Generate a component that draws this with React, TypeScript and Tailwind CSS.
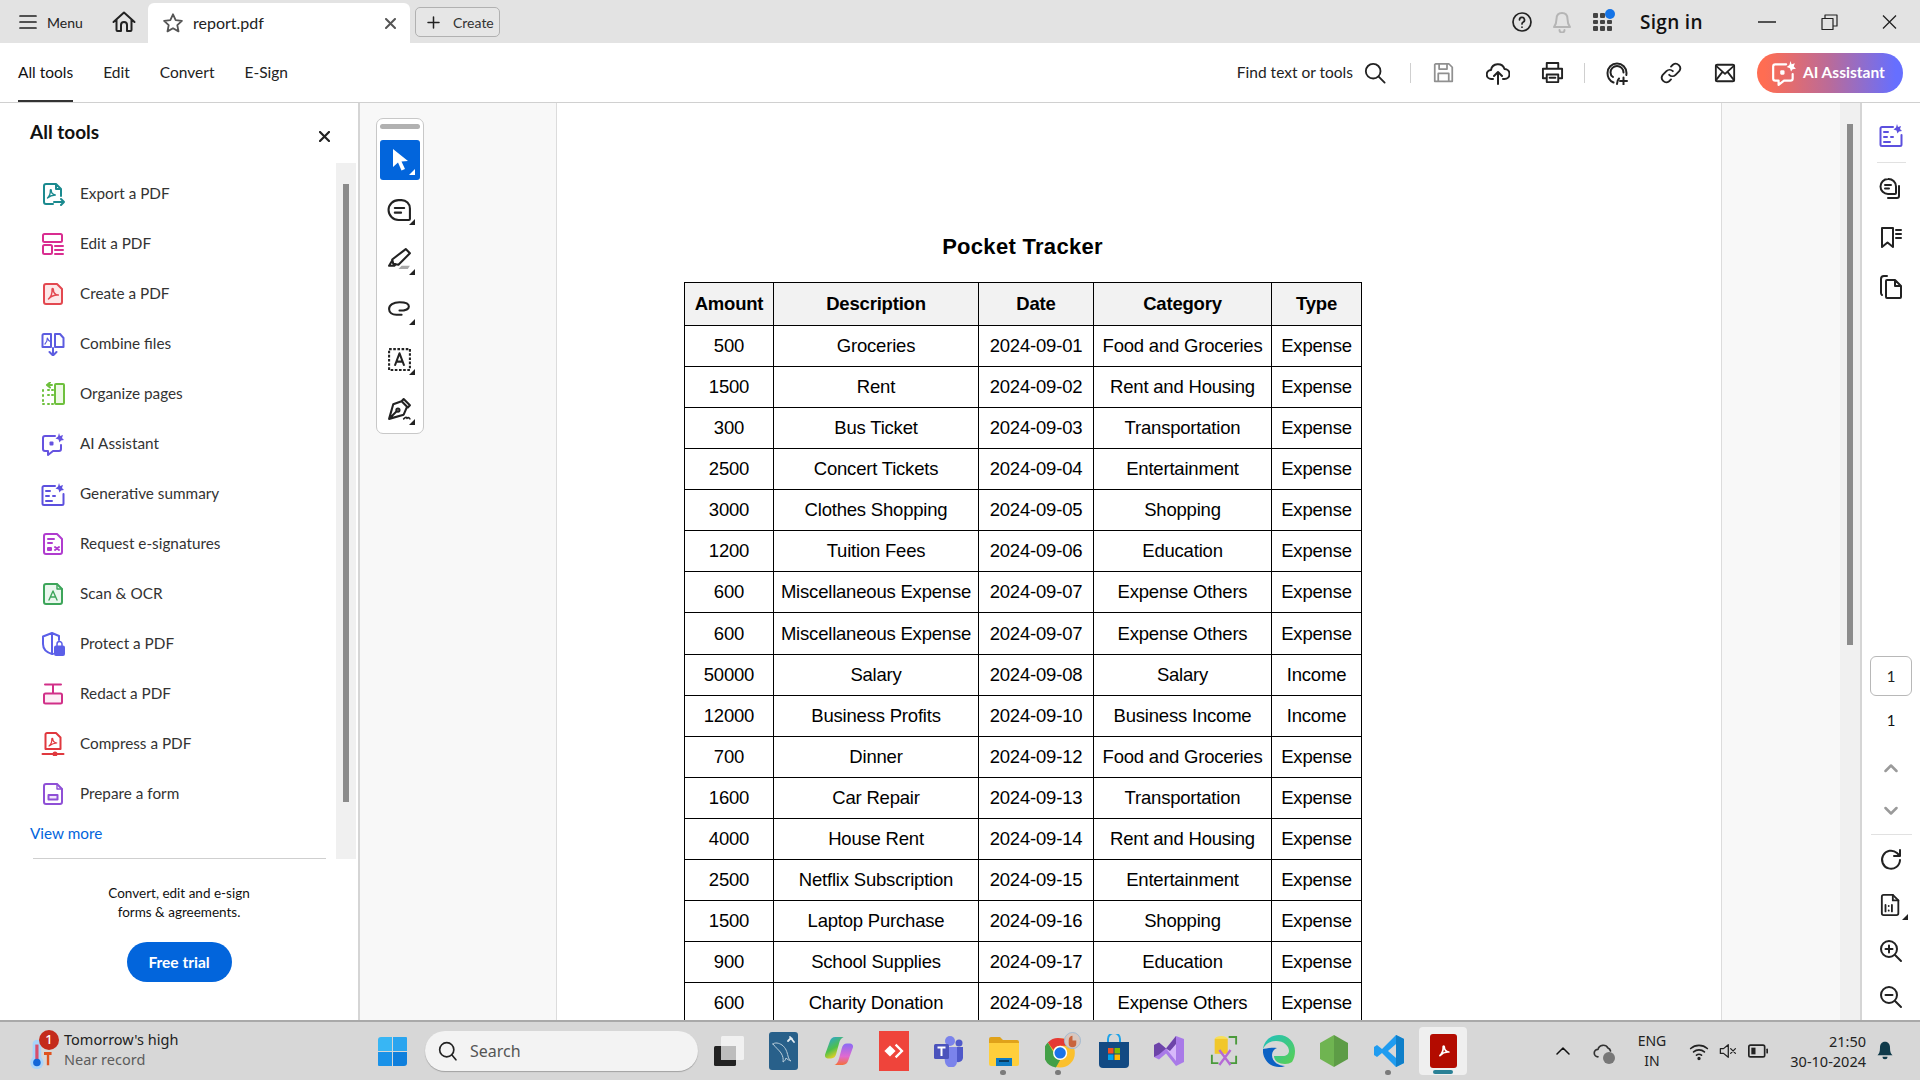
import type { ReactNode } from 'react';

const pdfMark = 'M7.5 17c2.2-2 3.8-6 3.6-9.6-.1-1.2 1.200-1.200 1.200 0 0 3 2 5.200 5 5.700-3.300-.3-6.800.9-9.800 3.900z';

function Svg({ children, className, view = '0 0 24 24' }: { children: ReactNode; className: string; view?: string }) {
  return (
    <svg viewBox={view} fill="none" stroke="currentColor" strokeWidth={2} strokeLinecap="round" strokeLinejoin="round" className={className}>
      {children}
    </svg>
  );
}

const tools = [
  {
    label: 'Export a PDF',
    color: 'text-[#1b8a8f]',
    icon: (
      <>
        <path d="M15 2H5a2 2 0 0 0-2 2v16a2 2 0 0 0 2 2h7M15 2l5 5v7M15 2v5h5" />
        <path d="M6.500 16c1.500-1.500 3-4.500 2.800-7.500 0-1 1-1 1 0 0 2.500 1.500 4 4 4.500-2.500 0-5.300.8-7.800 3z" strokeWidth={1.300} />
        <path d="M13 20h10M20 17l3 3-3 3" />
      </>
    ),
  },
  {
    label: 'Edit a PDF',
    color: 'text-[#d92d90]',
    icon: (
      <>
        <rect x="2" y="2" width="19" height="8" rx="1.500" />
        <rect x="2" y="13" width="9" height="9" rx="1.500" />
        <path d="M14 14h8M14 18h8M14 22h8" />
      </>
    ),
  },
  {
    label: 'Create a PDF',
    color: 'text-[#e34850]',
    icon: (
      <>
        <path d="M16 2H5a2 2 0 0 0-2 2v16a2 2 0 0 0 2 2h14a2 2 0 0 0 2-2V7z" fill="#fde8e8" />
        <path d={pdfMark} strokeWidth={1.500} />
      </>
    ),
  },
  {
    label: 'Combine files',
    color: 'text-[#5c5ce0]',
    icon: (
      <>
        <path d="M10 2H3a1.500 1.500 0 0 0-1.500 1.500V15H10zM14 15h8.500V6L19 2h-5z" />
        <path d="M12 16v7M8.500 20l3.500 3.500 3.500-3.500" />
        <path d="M4 12c1.500-1.500 2.500-3.500 2.300-6 1 2.500 1.700 3 3 3.500" strokeWidth={1.200} />
      </>
    ),
  },
  {
    label: 'Organize pages',
    color: 'text-[#6ec03d]',
    icon: (
      <>
        <rect x="14" y="2" width="9" height="20" rx="1" fill="#eef9e6" />
        <path d="M11 3H6M6 3l3-2.500M6 3l3 2.500M2 8v1M2 13v1M2 18v1M2 22h1M7 22h1M7 13h1M7 8h1M11 22h1M11 13h1M11 8h1" />
      </>
    ),
  },
  {
    label: 'AI Assistant',
    color: 'text-[#6553e0]',
    icon: (
      <>
        <path d="M14 4H4a2 2 0 0 0-2 2v11a2 2 0 0 0 2 2h3v4l5-4h6a2 2 0 0 0 2-2v-4" />
        <path d="M9.500 10.500h2v2h-2z" fill="currentColor" />
        <path d="M18 1l1 3 3-1-1 3 2 2-3 .5-1.500 2-1-3-3-1 2.500-2z" fill="currentColor" stroke="none" />
      </>
    ),
  },
  {
    label: 'Generative summary',
    color: 'text-[#5c50de]',
    icon: (
      <>
        <path d="M14 4H3a1.500 1.500 0 0 0-1.500 1.500v16A1.500 1.500 0 0 0 3 23h18a1.500 1.500 0 0 0 1.500-1.500V12" />
        <path d="M5 9h4M5 14h3M5 19h6M12 14h2" />
        <path d="M18 1l1 3 3-1-1 3 2 2-3 .5-1.500 2-1-3-3-1 2.500-2z" fill="currentColor" stroke="none" />
      </>
    ),
  },
  {
    label: 'Request e-signatures',
    color: 'text-[#b03ccf]',
    icon: (
      <>
        <path d="M16 2H5a2 2 0 0 0-2 2v16a2 2 0 0 0 2 2h14a2 2 0 0 0 2-2V7z" />
        <path d="M7 7h6M7 11h4M7 16h3v2H7zM14 15l4 3M18 15l-4 3" />
      </>
    ),
  },
  {
    label: 'Scan & OCR',
    color: 'text-[#3da55a]',
    icon: (
      <>
        <path d="M16 2H5a2 2 0 0 0-2 2v16a2 2 0 0 0 2 2h14a2 2 0 0 0 2-2V7z" fill="#eaf7ee" />
        <path d="M16 2v5h5" strokeWidth={1.400} />
        <path d="M8 18l4-9 4 9M9.500 15h5" strokeWidth={1.400} />
      </>
    ),
  },
  {
    label: 'Protect a PDF',
    color: 'text-[#5b5fe8]',
    icon: (
      <>
        <path d="M11 1L2 4.500V12c0 5 4 8.500 9 10 .6 0 1-.2 1-.2M11 1l7 3v4M11 1v21" />
        <rect x="14" y="14.500" width="9" height="8.500" rx="1" fill="currentColor" />
        <path d="M16 14v-2a2.500 2.500 0 0 1 5 0v2" strokeWidth={1.500} />
      </>
    ),
  },
  {
    label: 'Redact a PDF',
    color: 'text-[#d12f88]',
    icon: (
      <>
        <path d="M4 2.500h16M12 2.500V11" />
        <rect x="3" y="11.500" width="18" height="10" rx="1.500" fill="#fdeef6" />
      </>
    ),
  },
  {
    label: 'Compress a PDF',
    color: 'text-[#e0383e]',
    icon: (
      <>
        <path d="M15 1H6a1.500 1.500 0 0 0-1.500 1.500V17h15V5.500z" />
        <path d="M8 14c1.800-1.500 3-4 2.800-7 0-1 1-1 1 0 0 2.500 1.500 3.500 4 4-2.500 0-5 1-7.800 3z" strokeWidth={1.200} />
        <path d="M1.500 22h21" />
        <circle cx="14" cy="22" r="1.500" />
      </>
    ),
  },
  {
    label: 'Prepare a form',
    color: 'text-[#8f50d6]',
    icon: (
      <>
        <path d="M16 2H5a2 2 0 0 0-2 2v16a2 2 0 0 0 2 2h14a2 2 0 0 0 2-2V7z" />
        <path d="M16 2v5h5" strokeWidth={1.400} />
        <rect x="7.500" y="13" width="9" height="4.500" fill="#f0e6fb" />
      </>
    ),
  },
];

const rows = [
  ['500', 'Groceries', '2024-09-01', 'Food and Groceries', 'Expense'],
  ['1500', 'Rent', '2024-09-02', 'Rent and Housing', 'Expense'],
  ['300', 'Bus Ticket', '2024-09-03', 'Transportation', 'Expense'],
  ['2500', 'Concert Tickets', '2024-09-04', 'Entertainment', 'Expense'],
  ['3000', 'Clothes Shopping', '2024-09-05', 'Shopping', 'Expense'],
  ['1200', 'Tuition Fees', '2024-09-06', 'Education', 'Expense'],
  ['600', 'Miscellaneous Expense', '2024-09-07', 'Expense Others', 'Expense'],
  ['600', 'Miscellaneous Expense', '2024-09-07', 'Expense Others', 'Expense'],
  ['50000', 'Salary', '2024-09-08', 'Salary', 'Income'],
  ['12000', 'Business Profits', '2024-09-10', 'Business Income', 'Income'],
  ['700', 'Dinner', '2024-09-12', 'Food and Groceries', 'Expense'],
  ['1600', 'Car Repair', '2024-09-13', 'Transportation', 'Expense'],
  ['4000', 'House Rent', '2024-09-14', 'Rent and Housing', 'Expense'],
  ['2500', 'Netflix Subscription', '2024-09-15', 'Entertainment', 'Expense'],
  ['1500', 'Laptop Purchase', '2024-09-16', 'Shopping', 'Expense'],
  ['900', 'School Supplies', '2024-09-17', 'Education', 'Expense'],
  ['600', 'Charity Donation', '2024-09-18', 'Expense Others', 'Expense'],
];

function TitleBar() {
  return (
    <div className="flex h-[43px] shrink-0 items-center bg-[#e3e3e3] pt-[1px] text-[#222]">
      <Svg className="ml-[19px] h-[16px] w-[18px]" view="0 0 18 16">
        <path d="M1 2h16M1 8h16M1 14h16" strokeWidth={1.700} />
      </Svg>
      <span className="ml-[10px] w-[35px] text-[14px]">Menu</span>
      <Svg className="ml-[30px] h-[24px] w-[24px]">
        <path d="M1.500 12L12 2.500 22.500 12M4.500 9.500V20a1 1 0 0 0 1 1H9v-6a3 3 0 0 1 6 0v6h3.500a1 1 0 0 0 1-1V9.500" />
      </Svg>
      <div className="ml-[12px] flex h-[40px] w-[262px] items-center self-end rounded-t-md bg-white">
        <Svg className="ml-[14px] h-[22px] w-[22px] text-[#555]">
          <path d="M12 2.500l2.900 6.300 6.800.8-5 4.700 1.300 6.800-6-3.400-6 3.400 1.300-6.800-5-4.700 6.800-.8z" />
        </Svg>
        <span className="ml-[9px] text-[16px]">report.pdf</span>
        <Svg className="ml-auto mr-[14px] h-[11px] w-[11px] text-[#555]" view="0 0 11 11">
          <path d="M1 1l9 9M10 1l-9 9" />
        </Svg>
      </div>
      <div className="ml-[5px] flex h-[30px] w-[85px] items-center rounded-[5px] border border-[#b1b1b1] bg-[#e6e6e6]">
        <Svg className="ml-[11px] h-[13px] w-[13px]" view="0 0 13 13">
          <path d="M6.500 1v11M1 6.500h11" strokeWidth={1.500} />
        </Svg>
        <span className="ml-[13px] text-[14px] text-[#333]">Create</span>
      </div>

      <div className="ml-auto flex items-center pr-[23px]">
        <Svg className="h-[20px] w-[20px]" view="0 0 20 20">
          <circle cx="10" cy="10" r="9" strokeWidth={1.700} />
          <path d="M7.500 8a2.500 2.500 0 1 1 3.500 2.200c-.7.4-1 .8-1 1.800M10 15v.2" strokeWidth={1.700} />
        </Svg>
        <Svg className="ml-[21px] h-[22px] w-[18px] text-[#b5b5b5]" view="0 0 18 22">
          <path d="M9 2c-3.500 0-5.500 2.500-5.500 6 0 4-1 6-2.500 8h16c-1.500-2-2.500-4-2.500-8 0-3.500-2-6-5.500-6zM6.500 19a2.500 2.500 0 0 0 5 0" />
        </Svg>
        <div className="relative ml-[22px] grid h-[18px] w-[19px] grid-cols-3 gap-[2px]">
          {Array.from({ length: 9 }).map((_, i) => (
            <span key={i} className="rounded-[1px] bg-[#444]" />
          ))}
          <span className="absolute right-[-3px] top-[-4px] h-[10px] w-[10px] rounded-full bg-[#1473e6]" />
        </div>
        <span className="ml-[28px] w-[64px] whitespace-nowrap font-['Open_Sans',sans-serif] text-[19px] font-semibold tracking-[0.3px] text-[#111]">
          Sign in
        </span>
        <Svg className="ml-[54px] h-[2px] w-[18px]" view="0 0 18 2">
          <path d="M0 1h18" strokeWidth={1.500} strokeLinecap="butt" />
        </Svg>
        <Svg className="ml-[45px] h-[16px] w-[17px]" view="0 0 17 16">
          <path d="M1 4.500h11v11H1zM4 4.500V1h12v11h-4" strokeWidth={1.200} strokeLinecap="butt" />
        </Svg>
        <Svg className="ml-[44px] h-[14px] w-[15px]" view="0 0 15 14">
          <path d="M1 .5l13 13M14 .5l-13 13" strokeWidth={1.300} strokeLinecap="butt" />
        </Svg>
      </div>
    </div>
  );
}

function Toolbar() {
  return (
    <div className="flex h-[60px] shrink-0 items-center border-b border-[#d0d0d0] bg-white text-[15.500px] text-[#222]">
      <div className="ml-[18px] flex h-full items-center border-b-2 border-[#333] pt-[2px] text-[#111]">All tools</div>
      <span className="ml-[30px]">Edit</span>
      <span className="ml-[30px]">Convert</span>
      <span className="ml-[30px]">E-Sign</span>

      <div className="ml-auto flex items-center pr-[17px]">
        <span>Find text or tools</span>
        <Svg className="ml-[11px] h-[22px] w-[22px]">
          <circle cx="10" cy="10" r="8" />
          <path d="M16 16l6.500 6.500" />
        </Svg>
        <span className="ml-[24px] h-[20px] w-px bg-[#cfcfcf]" />
        <Svg className="ml-[22px] h-[21px] w-[21px] text-[#909090]">
          <path d="M3 2h15l4 4v16H2V3zM7 2v6h9V2M6 22v-9h12v9" />
        </Svg>
        <Svg className="ml-[32px] h-[24px] w-[24px]">
          <path d="M7 18H5.500a4.500 4.500 0 0 1-.5-9 7 7 0 0 1 13.500-1 5 5 0 0 1 0 10H17M12 23V11M8 15l4-4 4 4" />
        </Svg>
        <Svg className="ml-[31px] h-[23px] w-[23px]">
          <path d="M6 8V2h12v6M6 18H2V8h20v10h-4M6 14h12v8H6z" />
          <path d="M9 17.500h6" />
        </Svg>
        <span className="ml-[20px] h-[20px] w-px bg-[#cfcfcf]" />
        <Svg className="ml-[20px] h-[24px] w-[24px]">
          <path d="M8.500 21.500C5 20 2.500 16.500 2.500 12a9.500 9.500 0 0 1 19 0c0 .7-.1 1.300-.2 2M8 16c-1.500-1-2.500-2.500-2.500-4.500a6.500 6.500 0 0 1 13 0M12 23c0-3 .5-4 2-5.500M18.500 16.500v7M15 20h7" />
        </Svg>
        <Svg className="ml-[31px] h-[22px] w-[22px]">
          <path d="M10 14a5 5 0 0 0 7 0l4-4a5 5 0 0 0-7-7l-2 2M14 10a5 5 0 0 0-7 0l-4 4a5 5 0 0 0 7 7l2-2" />
        </Svg>
        <Svg className="ml-[32px] h-[22px] w-[22px]">
          <rect x="2" y="3" width="20" height="18" rx="1.500" />
          <path d="M2 4l10 9 10-9M2 20l7-9M22 20l-7-9" />
        </Svg>
        <div className="ml-[21px] flex h-[40px] w-[146px] items-center rounded-[20px] bg-[linear-gradient(90deg,#ff6d52_5%,#b96b9a_50%,#666fff_95%)] font-bold text-white">
          <Svg className="ml-[14px] h-[26px] w-[26px]">
            <path d="M14 4H4a2 2 0 0 0-2 2v11a2 2 0 0 0 2 2h3v4l5-4h6a2 2 0 0 0 2-2v-4" />
            <path d="M9.500 10.500h2v2h-2z" fill="currentColor" />
            <path d="M18 1l1 3 3-1-1 3 2 2-3 .5-1.500 2-1-3-3-1 2.500-2z" fill="currentColor" stroke="none" />
          </Svg>
          <span className="ml-[6px] whitespace-nowrap text-[15.500px]">AI Assistant</span>
        </div>
      </div>
    </div>
  );
}

function Sidebar() {
  return (
    <aside className="flex w-[360px] shrink-0 flex-col border-r-2 border-[#d5d5d5] bg-white">
      <div className="flex h-[60px] shrink-0 items-center pb-[2px] pl-[30px] pr-[28px]">
        <h2 className="text-[19px] font-bold text-[#111]">All tools</h2>
        <Svg className="ml-auto mt-[8px] h-[11px] w-[11px] text-[#222]" view="0 0 11 11">
          <path d="M1 1l9 9M10 1l-9 9" strokeWidth={2.200} />
        </Svg>
      </div>
      <div className="flex h-[696px] shrink-0">
        <div className="flex flex-1 flex-col pt-[5px]">
          {tools.map((t) => (
            <div key={t.label} className="flex h-[50px] shrink-0 items-center pl-[41px] pt-[1px]">
              <Svg className={`h-[24px] w-[24px] ${t.color}`}>{t.icon}</Svg>
              <span className="ml-[15px] text-[15.300px] text-[#333]">{t.label}</span>
            </div>
          ))}
          <a className="ml-[30px] mt-[4px] text-[15.300px] text-[#0265dc]">View more</a>
          <div className="ml-[33px] mr-[10px] mt-auto h-px bg-[#cfcfcf]" />
        </div>
        <div className="mr-[2px] w-[20px] bg-[#f0f0f0] pl-[7px] pt-[21px]">
          <div className="h-[618px] w-[6px] bg-[#8b8b8b]" />
        </div>
      </div>
      <div className="flex flex-col items-center pt-[25px] text-center text-[13.500px] leading-[19px] text-[#111]">
        <p>Convert, edit and e-sign</p>
        <p>forms &amp; agreements.</p>
        <button className="mt-[20px] h-[40px] w-[105px] rounded-[20px] bg-[#0265dc] text-[15.500px] font-bold text-white">Free trial</button>
      </div>
    </aside>
  );
}

function Corner({ white }: { white?: boolean }) {
  return (
    <svg viewBox="0 0 6 6" className={`absolute bottom-[5px] right-[5px] h-[6px] w-[6px] ${white ? 'text-white' : 'text-[#222]'}`} fill="currentColor">
      <path d="M6 0v6H0z" />
    </svg>
  );
}

function Tool({ children }: { children: ReactNode }) {
  return (
    <div className="relative mt-[10px] flex h-[40px] w-[40px] items-center justify-center text-[#222]">
      <Svg className="mb-[2px] mr-[2px] h-[25px] w-[25px]">{children}</Svg>
      <Corner />
    </div>
  );
}

function Palette() {
  return (
    <div className="flex h-[316px] w-[48px] flex-col items-center rounded-[7px] border border-[#c8c8c8] bg-white pt-[5px]">
      <div className="h-[5px] w-[40px] rounded-full bg-[#b1b1b1]" />
      <div className="relative mt-[11px] flex h-[40px] w-[40px] items-center justify-center rounded-[3px] bg-[#0265dc]">
        <svg viewBox="0 0 20 24" className="mr-[1px] h-[24px] w-[20px]" fill="white">
          <path d="M3 1v18l5-4.500 3.500 8 3.500-1.500-3.500-7.500 6.500-.5z" />
        </svg>
        <Corner white />
      </div>
      <Tool>
        <path d="M11 3h3a8 8 0 0 1 8 8v10a1 1 0 0 1-1 1H11A9.500 9.500 0 0 1 11 3zM7.500 10.500h9M7.500 15h6" />
      </Tool>
      <Tool>
        <path d="M18 2l4 4L11 17l-5-1-1-4zM5 13l-3 5h5l1.500-1.500" />
        <path d="M11 21l3-3h8l-2 3z" fill="#a8a8a8" stroke="none" />
      </Tool>
      <Tool>
        <path d="M14 17H9C5 17 2 15 2 11.500S6 5 12 5c5 0 9 1 9 4s-5 4-9 4" />
      </Tool>
      <Tool>
        <path d="M2 2h20v20H2z" strokeDasharray="2.500 1.500" strokeLinecap="butt" />
        <path d="M7.500 18L12 6l4.500 12M9 14h6" strokeLinecap="butt" />
      </Tool>
      <Tool>
        <path d="M16 2l6 6-2 2-6-6zM14 4L6 7 2 21l14-4 3-7M2 21l7-7" />
        <circle cx="10.500" cy="12.500" r="1.500" />
        <path d="M16 21c2-2 3-2 3-.5 1-1 2-1 3 .5" strokeWidth={1.500} />
      </Tool>
    </div>
  );
}

function PdfPage() {
  return (
    <div className="w-[1166px] shrink-0 border-l border-r border-[#dcdcdc] bg-white pl-[127px] pt-[128px] font-['Liberation_Sans',Arial,sans-serif]">
      <h1 className="mb-[21px] h-[30px] w-[677px] pt-[1px] text-center text-[22px] font-bold leading-[30px] tracking-[0.3px] text-black">Pocket Tracker</h1>
      <table className="w-[677px] table-fixed border-collapse text-center text-[18.500px] leading-[20px] tracking-[-0.2px] text-black">
        <colgroup>
          <col className="w-[89px]" />
          <col className="w-[205px]" />
          <col className="w-[115px]" />
          <col className="w-[178px]" />
          <col className="w-[90px]" />
        </colgroup>
        <thead>
          <tr className="h-[43px] bg-[#f2f2f2] font-bold">
            {['Amount', 'Description', 'Date', 'Category', 'Type'].map((h) => (
              <th key={h} className="border border-black p-0">{h}</th>
            ))}
          </tr>
        </thead>
        <tbody>
          {rows.map((r, i) => (
            <tr key={i} className={i === 7 ? 'h-[42px]' : 'h-[41px]'}>
              {r.map((c, j) => (
                <td key={j} className="border border-black p-0">{c}</td>
              ))}
            </tr>
          ))}
        </tbody>
      </table>
    </div>
  );
}

function RightRail() {
  return (
    <div className="flex w-[60px] shrink-0 flex-col items-center border-l-2 border-[#d5d5d5] bg-white text-[#222]">
      <Svg className="mt-[20px] h-[24px] w-[24px] text-[#5c50de]">
        <path d="M14 4H3a1.500 1.500 0 0 0-1.500 1.500v16A1.500 1.500 0 0 0 3 23h18a1.500 1.500 0 0 0 1.500-1.500V12" />
        <path d="M5 9h4M5 14h3M5 19h6M12 14h2" />
        <path d="M18 1l1 3 3-1-1 3 2 2-3 .5-1.500 2-1-3-3-1 2.500-2z" fill="currentColor" stroke="none" />
      </Svg>
      <div className="mt-[15px] h-px w-[29px] bg-[#e1e1e1]" />
      <Svg className="mt-[14px] h-[24px] w-[24px]">
        <path d="M9 2a7.500 7.500 0 0 0 0 15h7a1 1 0 0 0 1-1V9.500A7.500 7.500 0 0 0 9 2zM6 8h6M6 11.500h4M20 9v10a2 2 0 0 1-2 2H9" />
      </Svg>
      <Svg className="mt-[25px] h-[24px] w-[24px]">
        <path d="M3 2h11v19l-5.500-4.500L3 21zM17 4h5M17 8h5M17 12h5" />
      </Svg>
      <Svg className="mt-[25px] h-[24px] w-[24px]">
        <path d="M8 1H5a3 3 0 0 0-3 3v14a3 3 0 0 0 1 2M14 5H8a1 1 0 0 0-1 1v16a1 1 0 0 0 1 1h13a1 1 0 0 0 1-1V11l-6-6zM16 5v6h6" />
      </Svg>
      <div className="mt-[357px] flex h-[40px] w-[42px] items-center justify-center rounded-[6px] border border-[#b8b8b8] text-[15px] text-[#222]">1</div>
      <span className="mt-[13px] h-[22px] text-[15px] leading-[22px] text-[#111]">1</span>
      <Svg className="mt-[32px] h-[10px] w-[14px] text-[#9a9a9a]" view="0 0 14 10">
        <path d="M1.500 8L7 2.500 12.500 8" strokeWidth={2.500} />
      </Svg>
      <Svg className="mt-[33px] h-[10px] w-[14px] text-[#9a9a9a]" view="0 0 14 10">
        <path d="M1.500 2L7 7.500 12.500 2" strokeWidth={2.500} />
      </Svg>
      <div className="mt-[18px] h-px w-[41px] bg-[#e1e1e1]" />
      <Svg className="mt-[13px] h-[24px] w-[24px]">
        <path d="M21 12a9 9 0 1 1-3-7l3 3M21 2v6h-6" />
      </Svg>
      <div className="relative mt-[21px] flex h-[24px] w-[24px] justify-center">
        <Svg className="h-[24px] w-[22px]">
          <path d="M14 1H4a2 2 0 0 0-2 2v18a2 2 0 0 0 2 2h14a2 2 0 0 0 2-2V7z" />
          <path d="M14 1v6h6M6 12v7M9.500 13v.2M9.500 18v.2M13 12v7" />
        </Svg>
        <svg viewBox="0 0 6 6" className="absolute bottom-[-3px] right-[-5px] h-[6px] w-[6px]" fill="#222">
          <path d="M6 0v6H0z" />
        </svg>
      </div>
      <Svg className="mt-[22px] h-[24px] w-[24px]">
        <circle cx="10" cy="10" r="8" />
        <path d="M16 16l6 6M6.500 10h7M10 6.500v7" />
      </Svg>
      <Svg className="mt-[22px] h-[24px] w-[24px]">
        <circle cx="10" cy="10" r="8" />
        <path d="M16 16l6 6M6.500 10h7" />
      </Svg>
    </div>
  );
}

function Slot({ children, dot, active }: { children: ReactNode; dot?: boolean; active?: boolean }) {
  return (
    <div className="relative flex h-[60px] w-[55px] shrink-0 items-center justify-center">
      {active && <div className="absolute left-[3px] top-[6px] h-[48px] w-[48px] rounded-[4px] bg-[#efefef]" />}
      <div className="relative flex items-center justify-center">{children}</div>
      {dot && <span className="absolute bottom-[6px] left-[24px] h-[5px] w-[6px] rounded-full bg-[#7b7b7b]" />}
      {active && <span className="absolute bottom-[7px] left-[17px] h-[4px] w-[20px] rounded-full bg-[#2a8196]" />}
    </div>
  );
}

function Taskbar() {
  return (
    <div className="flex h-[60px] shrink-0 items-center border-t-2 border-[#a9a9a9] bg-[#d7d7d7] font-['Noto_Sans',sans-serif] text-[#222]">
      <div className="flex w-[378px] shrink-0 items-center pl-[29px]">
        <div className="relative h-[40px] w-[35px] shrink-0">
          <svg viewBox="0 0 30 36" className="absolute left-0 top-[6px] h-[34px] w-[30px]">
            <rect x="3" y="3" width="9" height="24" rx="4.500" fill="#a9d4fa" />
            <circle cx="7.500" cy="27" r="7" fill="#a9d4fa" />
            <rect x="5.800" y="8" width="3.400" height="18" fill="#d74f6c" />
            <circle cx="7.500" cy="27" r="4" fill="#1467d8" />
            <path d="M15 16h8v3h-2.500v11H18V19h-3z" fill="#e0531f" />
          </svg>
          <span className="absolute left-[10px] top-[-1px] flex h-[20px] w-[20px] items-center justify-center rounded-full bg-[#c42b1c] text-[13px] font-medium text-white">1</span>
        </div>
        <div className="mb-[4px] flex flex-col text-[14.500px] leading-[20px]">
          <span className="text-[#222]">Tomorrow's high</span>
          <span className="text-[#5c5c5c]">Near record</span>
        </div>
      </div>

      <div className="grid h-[29px] w-[29px] shrink-0 grid-cols-2 gap-[1px] overflow-hidden">
        <span className="rounded-tl-[3px] bg-[#38b6f4]" />
        <span className="rounded-tr-[1px] bg-[#2aa5ef]" />
        <span className="rounded-bl-[1px] bg-[#1a92e8]" />
        <span className="rounded-br-[3px] bg-[#0f7fdc]" />
      </div>
      <div className="ml-[18px] flex h-[40px] w-[273px] shrink-0 items-center rounded-[20px] bg-[#f3f3f3] shadow-[0_1px_1px_rgba(0,0,0,0.25)]">
        <Svg className="ml-[13px] h-[20px] w-[20px] text-[#222]">
          <circle cx="10.500" cy="10.500" r="8.500" />
          <path d="M16.500 16.500l5 6" />
        </Svg>
        <span className="ml-[12px] text-[16px] text-[#555]">Search</span>
      </div>

      <div className="ml-[3px] flex shrink-0">
        <Slot>
          <svg viewBox="0 0 30 30" className="h-[30px] w-[30px]">
            <rect x="0" y="10" width="22" height="20" rx="1.500" fill="#222" />
            <rect x="7" y="0" width="23" height="24" rx="1.500" fill="#f6f6f6" fillOpacity="0.85" />
            <rect x="7" y="10" width="15" height="14" fill="#bdbdbd" />
          </svg>
        </Slot>
        <Slot>
          <div className="flex h-[38px] w-[29px] items-center justify-center rounded-[3px] bg-[#28608a]">
            <svg viewBox="0 0 29 38" className="h-[38px] w-[29px]" fill="none" stroke="#b9cdda" strokeWidth={1} strokeLinecap="round" strokeLinejoin="round">
              <path d="M4 12c2-2 6-1 9 1 4 3 5 7 6 11 .5 3 2 4 3 5-2-.5-4-2-5-3-.5 1.500-1 3-3 4 .5-3 0-6-2-9-2-3-5-5-8-9z" />
              <path d="M21 5l4 5M19 9l3-3 1 1" strokeWidth={1.800} stroke="#e4edf3" />
            </svg>
          </div>
        </Slot>
        <Slot>
          <svg viewBox="0 0 30 32" className="h-[32px] w-[28px]">
            <defs>
              <linearGradient id="cpA" x1="0" y1="0" x2="0.500" y2="1">
                <stop offset="0" stopColor="#27a0e8" />
                <stop offset="0.600" stopColor="#4fc04a" />
                <stop offset="1" stopColor="#f6d21f" />
              </linearGradient>
              <linearGradient id="cpB" x1="0.500" y1="0" x2="0.500" y2="1">
                <stop offset="0" stopColor="#8a6bf5" />
                <stop offset="0.600" stopColor="#e06ad0" />
                <stop offset="1" stopColor="#f5703a" />
              </linearGradient>
            </defs>
            <path d="M11 1h9c-2.500 1-4 3-5 7l-3 11c-.8 3-2.500 5-5.500 5H3c-2 0-3.500-2-3-4L5 6c1-3 3-5 6-5z" fill="url(#cpA)" />
            <path d="M19 31h-9c2.500-1 4-3 5-7l3-11c.8-3 2.500-5 5.500-5H27c2 0 3.500 2 3 4l-5 14c-1 3-3 5-6 5z" fill="url(#cpB)" />
          </svg>
        </Slot>
        <Slot>
          <div className="flex h-[40px] w-[30px] items-center justify-center bg-[#ef443b]">
            <svg viewBox="0 0 24 20" className="h-[16px] w-[20px]" fill="white">
              <path d="M7 3l7 7-7 7-7-7z" />
              <path d="M15 1l9 9-9 9-2-2 7-7-7-7z" />
            </svg>
          </div>
        </Slot>
        <Slot>
          <svg viewBox="0 0 30 32" className="h-[32px] w-[30px]">
            <circle cx="16" cy="6" r="5" fill="#7b83eb" />
            <circle cx="25" cy="8" r="3.500" fill="#5059c9" />
            <path d="M20 12h9v11a5 5 0 0 1-9 2z" fill="#5059c9" />
            <path d="M9 12h14v14a6 6 0 0 1-12 1z" fill="#7b83eb" />
            <rect x="0" y="9" width="15" height="15" rx="1.500" fill="#4b53bc" />
            <path d="M3.500 12.500h8M7.500 12.500V21" stroke="white" strokeWidth={2} />
          </svg>
        </Slot>
        <Slot dot>
          <svg viewBox="0 0 30 30" className="h-[30px] w-[30px]">
            <path d="M0 3a2 2 0 0 1 2-2h9l3 3h14a2 2 0 0 1 2 2v4H0z" fill="#e0a21a" />
            <path d="M0 7h30v21a2 2 0 0 1-2 2H2a2 2 0 0 1-2-2z" fill="#ffcf3c" />
            <rect x="7" y="22" width="16" height="8" fill="#0f7bc4" />
            <rect x="10" y="24" width="10" height="2" fill="#083d62" />
          </svg>
        </Slot>
        <Slot dot>
          <svg viewBox="0 0 38 40" className="ml-[8px] h-[38px] w-[36px]">
            <circle cx="16" cy="22" r="15.500" fill="#fbc02d" />
            <path d="M16 6.500a15.500 15.500 0 0 1 13.500 8H16a7.500 7.500 0 0 0-7 4.500L3 11A15.500 15.500 0 0 1 16 6.500z" fill="#e53935" />
            <path d="M3 11l7 12a7.500 7.500 0 0 0 6 6.500l-4.500 7.800A15.500 15.500 0 0 1 3 11z" fill="#43a047" />
            <circle cx="16" cy="22" r="7.500" fill="white" />
            <circle cx="16" cy="22" r="6" fill="#1a73e8" />
            <circle cx="29" cy="9" r="8.500" fill="#d8c7bf" stroke="#9fb8d0" />
            <path d="M25 9c0-3 2-5 4-5v5h4v3a4 4 0 0 1-8 0z" fill="#c9643c" />
          </svg>
        </Slot>
        <Slot>
          <svg viewBox="0 0 30 34" className="h-[34px] w-[30px]">
            <path d="M9 8V5a6 6 0 0 1 12 0v3" fill="none" stroke="#1fa3e8" strokeWidth={2} />
            <path d="M0 8h30v22a4 4 0 0 1-4 4H4a4 4 0 0 1-4-4z" fill="#124a83" />
            <rect x="9" y="14" width="5.500" height="5.500" fill="#f25022" />
            <rect x="15.500" y="14" width="5.500" height="5.500" fill="#7fba00" />
            <rect x="9" y="20.500" width="5.500" height="5.500" fill="#00a4ef" />
            <rect x="15.500" y="20.500" width="5.500" height="5.500" fill="#ffb900" />
          </svg>
        </Slot>
        <Slot>
          <svg viewBox="0 0 30 32" className="h-[32px] w-[30px]">
            <path d="M0 10l5-2.500 7 6 10-12.500 8 3v23l-8 4-10-12.500-7 6-5-2.500z" fill="#a97ae8" />
            <path d="M22 1l-10 12.500L22 26V1z" fill="#d7b8fb" />
            <path d="M0 10l5-2.500 7 6-7 6L0 22zM12 13.500L22 1v8l-6 7z" fill="#6d44a8" />
          </svg>
        </Slot>
        <Slot>
          <svg viewBox="0 0 30 34" className="h-[34px] w-[28px]">
            <ellipse cx="12" cy="4" rx="7" ry="3" fill="#f6df5b" />
            <path d="M5 4v16h14V4" fill="#f1c72a" />
            <path d="M2 21v9h7M21 30h7v-8M20 2h8v8" fill="none" stroke="#4a9a3b" strokeWidth={2} />
            <path d="M10 16l12 16M22 16L10 32" stroke="#b56ad6" strokeWidth={2.500} />
          </svg>
        </Slot>
        <Slot>
          <svg viewBox="0 0 32 32" className="h-[32px] w-[32px]">
            <defs>
              <linearGradient id="edA" x1="0" y1="0" x2="1" y2="1">
                <stop offset="0" stopColor="#1ec0c0" />
                <stop offset="1" stopColor="#5bd04f" />
              </linearGradient>
            </defs>
            <path d="M16 0C7 0 1 6 0 14c2-5 7-8 13-8 8 0 13 5 13 10 0 3-3 5-6 5H11c0 5 5 8 11 8 3 0 5-1 7-2 2-3 3-7 3-11C32 7 25 0 16 0z" fill="url(#edA)" />
            <path d="M0 14c-1 9 6 18 16 18 2 0 4 0 6-1-6 0-13-4-13-11 0-3 2-6 5-7-7-1-12 1-14 1z" fill="#0c62c4" />
          </svg>
        </Slot>
        <Slot>
          <svg viewBox="0 0 28 32" className="h-[32px] w-[28px]">
            <path d="M14 0l14 8v16l-14 8z" fill="#5d9c46" />
            <path d="M14 0L0 8v16l14 8z" fill="#6fb451" />
          </svg>
        </Slot>
        <Slot dot>
          <svg viewBox="0 0 30 32" className="h-[34px] w-[30px]">
            <path d="M22 0l8 4v24l-8 4L8 18l-5 4-3-2V12l3-2 5 4z" fill="#1f9cf0" />
            <path d="M22 9l-8 7 8 7z" fill="#d7d7d7" />
            <path d="M22 0l8 4v24l-8 4z" fill="#0f7fc9" />
          </svg>
        </Slot>
        <Slot active>
          <div className="flex h-[34px] w-[27px] items-center justify-center rounded-[3px] bg-[#b30b00] text-white">
            <svg viewBox="0 0 24 24" className="h-[22px] w-[22px]" fill="none" stroke="currentColor" strokeWidth={1.800} strokeLinejoin="round">
              <path d={pdfMark} />
            </svg>
          </div>
        </Slot>
      </div>

      <div className="ml-[85px] flex shrink-0 items-center">
        <Svg className="h-[8px] w-[14px] text-[#111]" view="0 0 14 8">
          <path d="M1 7l6-6 6 6" strokeWidth={1.500} />
        </Svg>
        <div className="relative ml-[23px] h-[20px] w-[20px]">
          <Svg className="h-[20px] w-[20px] text-[#333]">
            <path d="M6 19a4.500 4.500 0 0 1 0-9 6.500 6.500 0 0 1 12-1.500A5 5 0 0 1 21 12" />
          </Svg>
          <span className="absolute bottom-[-3px] right-[-2px] h-[12px] w-[12px] rounded-full bg-[#777]" />
        </div>
        <div className="ml-[23px] flex w-[32px] flex-col items-center text-[14px] leading-[20px] text-[#222]">
          <span>ENG</span>
          <span>IN</span>
        </div>
        <Svg className="ml-[21px] h-[20px] w-[20px] text-[#222]">
          <path d="M2 9a15 15 0 0 1 20 0M5.500 13a10 10 0 0 1 13 0M9 17a5 5 0 0 1 6 0" />
          <circle cx="12" cy="21" r="1" fill="currentColor" />
        </Svg>
        <Svg className="ml-[9px] h-[20px] w-[19px] text-[#222]">
          <path d="M3 9h4l6-5v16l-6-5H3zM16 9l6 6M22 9l-6 6" strokeWidth={1.600} />
        </Svg>
        <Svg className="ml-[11px] h-[16px] w-[20px] text-[#222]" view="0 0 24 18">
          <rect x="1" y="2" width="19" height="14" rx="2" />
          <rect x="4" y="5" width="5" height="8" fill="currentColor" stroke="none" />
          <path d="M23 7v4" />
        </Svg>
        <div className="mb-[1px] ml-[20px] flex w-[78px] flex-col items-end whitespace-nowrap text-[14.500px] leading-[20px] text-[#222]">
          <span>21:50</span>
          <span>30-10-2024</span>
        </div>
        <svg viewBox="0 0 20 24" className="ml-[10px] h-[20px] w-[18px]" fill="#0f3a4a">
          <path d="M10 1c-4 0-6 3-6 7 0 5-1 7-3 9h18c-2-2-3-4-3-9 0-4-2-7-6-7zM7 19h6a3 3 0 0 1-6 0z" />
        </svg>
      </div>
    </div>
  );
}

export default function App() {
  return (
    <div className="flex h-screen w-full flex-col overflow-hidden bg-white font-['Lato',sans-serif]">
      <TitleBar />
      <Toolbar />
      <div className="flex min-h-0 flex-1 overflow-hidden">
        <Sidebar />
        <div className="flex w-[196px] shrink-0 bg-[#f8f8f8] pl-[16px] pt-[15px]">
          <Palette />
        </div>
        <PdfPage />
        <div className="w-[118px] shrink-0 bg-[#f8f8f8]" />
        <div className="w-[20px] shrink-0 bg-[#f0f0f0] pl-[7px] pt-[21px]">
          <div className="h-[521px] w-[6px] bg-[#8b8b8b]" />
        </div>
        <RightRail />
      </div>
      <Taskbar />
    </div>
  );
}
